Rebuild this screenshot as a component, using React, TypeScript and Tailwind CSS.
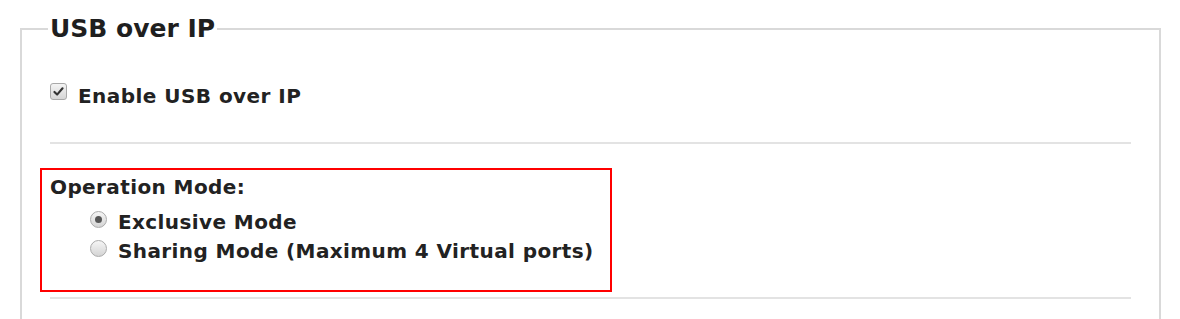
import { useState } from "react";

function Checkbox({ checked }: { checked: boolean }) {
    return (
        <span className="mt-[2px] inline-flex h-[17px] w-[17px] shrink-0 items-center justify-center rounded-[3px] border border-[#a9a9a9] bg-gradient-to-b from-[#f4f4f4] to-[#d6d6d6]">
            {checked && (
                <svg viewBox="0 0 16 16" className="h-[13px] w-[13px]">
                    <path d="M3 8.5 L6.3 11.8 L13 4" fill="none" stroke="#333" strokeWidth="2.6" strokeLinecap="round" strokeLinejoin="round" />
                </svg>
            )}
        </span>
    );
}

function Radio({ checked, onClick }: { checked: boolean; onClick: () => void }) {
    return (
        <span
            onClick={onClick}
            className="mt-[3px] inline-flex h-[17px] w-[17px] shrink-0 items-center justify-center rounded-full border border-[#ababab] bg-gradient-to-b from-[#f6f6f6] to-[#d4d4d4]"
        >
            {checked && <span className="h-[7px] w-[7px] rounded-full bg-[#555]" />}
        </span>
    );
}

export default function App() {
    const [mode, setMode] = useState("exclusive");
    return (
        <div className="bg-white w-[1180px] h-[319px] overflow-hidden pt-[14px] pl-[20px] pr-[19px] text-[#222] font-['DejaVu_Sans',Verdana,sans-serif]">
            <fieldset className="border-2 border-[#d9d9d9] px-[28px] h-[330px]">
                <legend className="-ml-[2px] px-[2px] text-[25px] leading-[30px] font-bold text-[#1f1f1f]">USB over IP</legend>

                <div className="flex items-start gap-[11px] pt-[37px] pb-[31px] text-[20px] leading-[30px] tracking-[0.45px] font-bold">
                    <Checkbox checked={true} />
                    <span>Enable USB over IP</span>
                </div>

                <div className="h-[2px] bg-[#e3e3e3]" />

                <div className="mt-[24px] -ml-[10px] w-[572px] h-[124px] border-2 border-[#ff0000] pl-[8px] pt-[3px] text-[20px] leading-[29px] tracking-[0.4px] font-bold">
                    <div>Operation Mode:</div>
                    <div className="mt-[6px] pl-[40px]">
                        <label className="flex items-start gap-[11px]">
                            <Radio checked={mode === "exclusive"} onClick={() => setMode("exclusive")} />
                            <span>Exclusive Mode</span>
                        </label>
                        <label className="flex items-start gap-[11px]">
                            <Radio checked={mode === "sharing"} onClick={() => setMode("sharing")} />
                            <span>Sharing Mode (Maximum 4 Virtual ports)</span>
                        </label>
                    </div>
                </div>

                <div className="mt-[5px] h-[2px] bg-[#e3e3e3]" />
            </fieldset>
        </div>
    );
}
